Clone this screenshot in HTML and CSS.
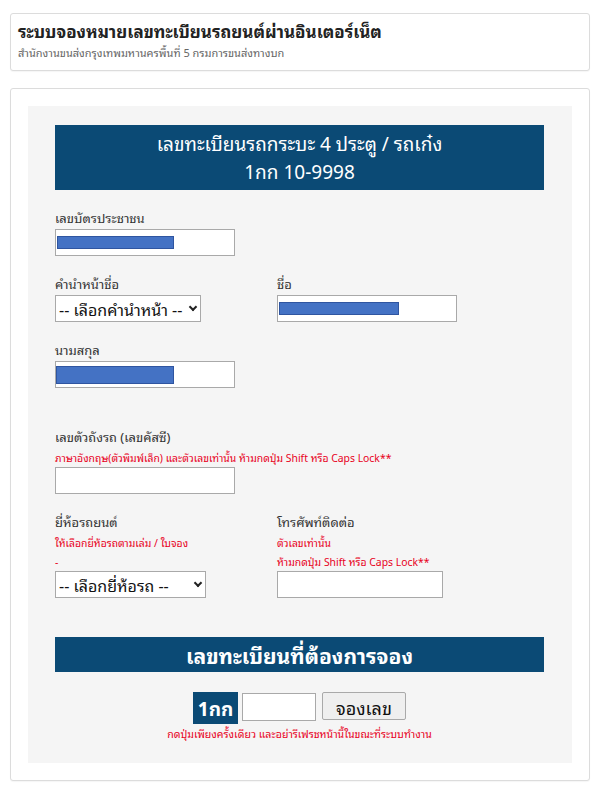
FILE: index.html
```html
<!DOCTYPE html>
<html lang="th">
<head>
<meta charset="utf-8">
<title>ระบบจองหมายเลขทะเบียนรถยนต์ผ่านอินเตอร์เน็ต</title>
<link rel="stylesheet" href="styles.css">
</head>
<body>
<div class="page">
  <div class="card head-card">
    <h1 class="title">ระบบจองหมายเลขทะเบียนรถยนต์ผ่านอินเตอร์เน็ต</h1>
    <div class="subtitle">สำนักงานขนส่งกรุงเทพมหานครพื้นที่ 5 กรมการขนส่งทางบก</div>
  </div>
  <div class="card main-card">
    <div class="panel">
      <div class="plate-head">
        <div>เลขทะเบียนรถกระบะ 4 ประตู / รถเก๋ง</div>
        <div>1กก 10-9998</div>
      </div>

      <div class="field f-id">
        <label class="lbl">เลขบัตรประชาชน</label>
        <div class="input w180"><span class="redact r117"></span></div>
      </div>

      <div class="row f-name">
        <div class="field">
          <label class="lbl">คำนำหน้าชื่อ</label>
          <div class="select w146"><span class="sel-text">-- เลือกคำนำหน้า --</span><span class="chev"></span></div>
        </div>
        <div class="field">
          <label class="lbl">ชื่อ</label>
          <div class="input w180"><span class="redact r120"></span></div>
        </div>
      </div>

      <div class="field f-last">
        <label class="lbl">นามสกุล</label>
        <div class="input w180"><span class="redact r118 tall"></span></div>
      </div>

      <div class="field f-vin">
        <label class="lbl">เลขตัวถังรถ (เลขคัสซี)</label>
        <div class="note">ภาษาอังกฤษ(ตัวพิมพ์เล็ก) และตัวเลขเท่านั้น ห้ามกดปุ่ม Shift หรือ Caps Lock**</div>
        <div class="input w180"></div>
      </div>

      <div class="row f-brand">
        <div class="field">
          <label class="lbl">ยี่ห้อรถยนต์</label>
          <div class="note">ให้เลือกยี่ห้อรถตามเล่ม / ใบจอง</div>
          <div class="note">-</div>
          <div class="select w151"><span class="sel-text">-- เลือกยี่ห้อรถ --</span><span class="chev"></span></div>
        </div>
        <div class="field">
          <label class="lbl">โทรศัพท์ติดต่อ</label>
          <div class="note">ตัวเลขเท่านั้น</div>
          <div class="note">ห้ามกดปุ่ม Shift หรือ Caps Lock**</div>
          <div class="input w166"></div>
        </div>
      </div>

      <div class="want-head">เลขทะเบียนที่ต้องการจอง</div>

      <div class="book-row">
        <span class="prefix">1กก</span>
        <span class="input book-input"></span>
        <span class="btn">จองเลข</span>
      </div>
      <div class="book-note">กดปุ่มเพียงครั้งเดียว และอย่ารีเฟรชหน้านี้ในขณะที่ระบบทำงาน</div>
    </div>
  </div>
</div>
</body>
</html>
```

FILE: styles.css
```css
* { box-sizing: border-box; }
body {
  margin: 0;
  background: #fff;
  font-family: Tahoma, "Leelawadee UI", "Noto Sans Thai Looped", "Noto Looped Thai", "Loma", "Garuda", "Waree", "Noto Sans Thai", "Noto Sans", "DejaVu Sans", sans-serif;
  color: #333;
}
.page { padding: 13px 10px 12px; }
.card {
  border: 1px solid #dcdcdc;
  border-radius: 3px;
  background: #fff;
  box-shadow: 0 1px 1px rgba(0,0,0,0.04);
}
.head-card {
  height: 58px;
  padding: 7px 7px 0;
}
.title {
  margin: 0;
  font-size: 17px;
  font-weight: bold;
  color: #222;
  line-height: 20px;
}
.subtitle {
  margin-top: 5px;
  font-size: 11px;
  color: #666;
  line-height: 13px;
}
.main-card {
  margin-top: 17px;
  padding: 17px 17px;
}
.panel {
  background: #f5f5f5;
  padding: 19px 28px 22px 27px;
}
.plate-head {
  background: #0b4a75;
  color: #fff;
  text-align: center;
  font-size: 19px;
  line-height: 28px;
  padding: 4px 0;
  height: 65px;
}
.lbl {
  display: block;
  font-size: 13px;
  color: #333;
  line-height: 16px;
  height: 16px;
  margin-bottom: 3px;
}
.note {
  font-size: 10.4px;
  color: #e8001c;
  line-height: 19px;
  height: 19px;
  white-space: nowrap;
}
.input {
  display: block;
  height: 27px;
  background: #fff;
  border: 1px solid #a9a9a9;
  padding: 6px 1px;
}
.w180 { width: 180px; }
.w166 { width: 166px; }
.w146 { width: 146px; }
.w151 { width: 151px; }
.redact {
  display: block;
  height: 13px;
  background: #4472c4;
  border: 1px solid #2f55a0;
}
.redact.tall { height: 18px; margin-top: -2px; margin-left: -1px; }
.r117 { width: 117px; }
.r118 { width: 118px; }
.r120 { width: 120px; }
.select {
  display: flex;
  align-items: center;
  height: 27px;
  background: #fff;
  border: 1px solid #a9a9a9;
  padding: 0 4px 0 3px;
  font-size: 16px;
  color: #111;
  justify-content: space-between;
  overflow: hidden;
}
.sel-text { white-space: nowrap; }
.chev {
  width: 6px; height: 6px;
  border-right: 2px solid #222;
  border-bottom: 2px solid #222;
  transform: rotate(45deg);
  margin-top: -4px;
  flex: none;
}
.row {
  display: grid;
  grid-template-columns: 222px 1fr;
}
.f-id { margin-top: 20px; }
.f-name { margin-top: 20px; }
.f-last { margin-top: 20px; }
.f-vin { margin-top: 41px; }
.f-brand { margin-top: 20px; }
.want-head {
  margin-top: 39px;
  background: #0b4a75;
  color: #fff;
  text-align: center;
  font-size: 21px;
  font-weight: bold;
  height: 35px;
  line-height: 35px;
}
.book-row {
  display: flex;
  justify-content: center;
  align-items: flex-start;
  margin-top: 20px;
  gap: 4px;
}
.prefix {
  background: #0b4a75;
  color: #fff;
  font-weight: bold;
  font-size: 19px;
  height: 32px;
  line-height: 32px;
  width: 45px;
  text-align: center;
}
.book-input {
  width: 74px;
  height: 28px;
  margin-top: 1px;
}
.btn {
  margin-left: 2px;
  width: 84px;
  height: 28px;
  background: #efefef;
  border: 1px solid #a9a9a9;
  border-radius: 2px;
  font-size: 18px;
  color: #111;
  text-align: center;
  line-height: 28px;
}
.book-note {
  text-align: center;
  font-size: 10.6px;
  color: #e8001c;
  margin-top: 3px;
  line-height: 14px;
}
```
